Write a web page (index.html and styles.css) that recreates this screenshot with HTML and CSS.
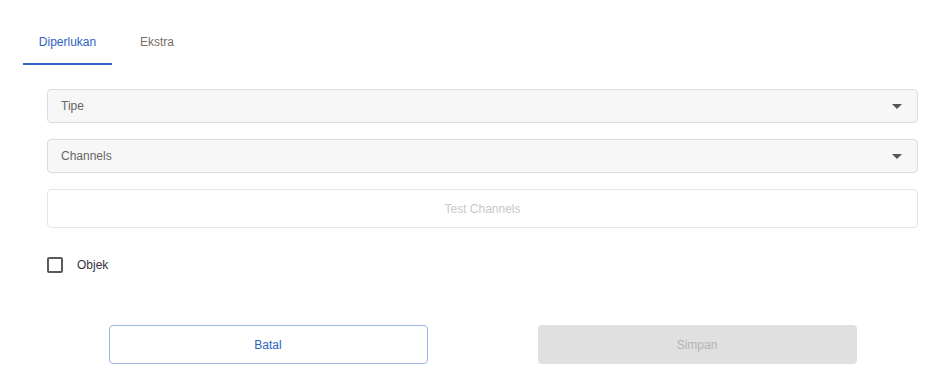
FILE: index.html
```html
<!DOCTYPE html>
<html lang="id">
<head>
    <meta charset="UTF-8">
    <meta name="viewport" content="width=device-width, initial-scale=1.0">
    <title>Channel</title>
    <link rel="stylesheet" href="styles.css">
</head>
<body>
    <div class="page">
        <!-- tab -->
        <div class="tabs">
            <div class="tab active">Diperlukan</div>
            <div class="tab">Ekstra</div>
        </div>

        <!-- form -->
        <div class="form">
            <div class="select">
                <span>Tipe</span>
                <span class="caret"></span>
            </div>
            <div class="select">
                <span>Channels</span>
                <span class="caret"></span>
            </div>
            <button class="btn-test" disabled>Test Channels</button>

            <label class="check-row">
                <span class="checkbox"></span>
                <span class="check-label">Objek</span>
            </label>

            <div class="actions">
                <button class="btn outline">Batal</button>
                <button class="btn disabled" disabled>Simpan</button>
            </div>
        </div>
    </div>
</body>
</html>
```

FILE: styles.css
```css
* {
    margin: 0;
    padding: 0;
    box-sizing: border-box;
}

body {
    font-family: 'Liberation Sans', Arial, sans-serif;
    font-size: 12px;
    background: #fff;
    color: #333;
}

.page {
    padding: 21px 22px 0 23px;
}

/* tab */
.tabs {
    display: flex;
}

.tab {
    height: 44px;
    display: flex;
    align-items: center;
    justify-content: center;
    width: 90px;
    color: #7a6e66;
    border-bottom: 2px solid transparent;
}

.tab.active {
    width: 89px;
    color: #2f62c2;
    border-bottom-color: #3463c0;
}

/* form */
.form {
    padding: 24px 0 0 24px;
    display: flex;
    flex-direction: column;
}

.select {
    height: 34px;
    background: #f7f7f7;
    border: 1px solid #dcdcdc;
    border-radius: 4px;
    display: flex;
    align-items: center;
    justify-content: space-between;
    padding: 0 15px 0 13px;
    color: #666;
    margin-bottom: 16px;
}

.caret {
    width: 0;
    height: 0;
    border-left: 5px solid transparent;
    border-right: 5px solid transparent;
    border-top: 5px solid #555;
}

.btn-test {
    height: 39px;
    background: #fff;
    border: 1px solid #e6e6e6;
    border-radius: 4px;
    font-family: inherit;
    font-size: 12px;
    color: #c8c8c8;
}

.check-row {
    display: flex;
    align-items: center;
    gap: 14px;
    margin-top: 29px;
    height: 16px;
}

.checkbox {
    width: 16px;
    height: 16px;
    border: 2px solid #5a5a5a;
    border-radius: 2px;
}

.check-label {
    color: #3a3040;
}

.actions {
    display: flex;
    justify-content: center;
    gap: 110px;
    margin-top: 52px;
}

.btn {
    width: 319px;
    height: 39px;
    border-radius: 4px;
    font-family: inherit;
    font-size: 12px;
}

.btn.outline {
    background: #fff;
    border: 1px solid #9db6e6;
    color: #2f62c2;
}

.btn.disabled {
    background: #e0e0e0;
    border: none;
    color: #b3b3b3;
}
```
